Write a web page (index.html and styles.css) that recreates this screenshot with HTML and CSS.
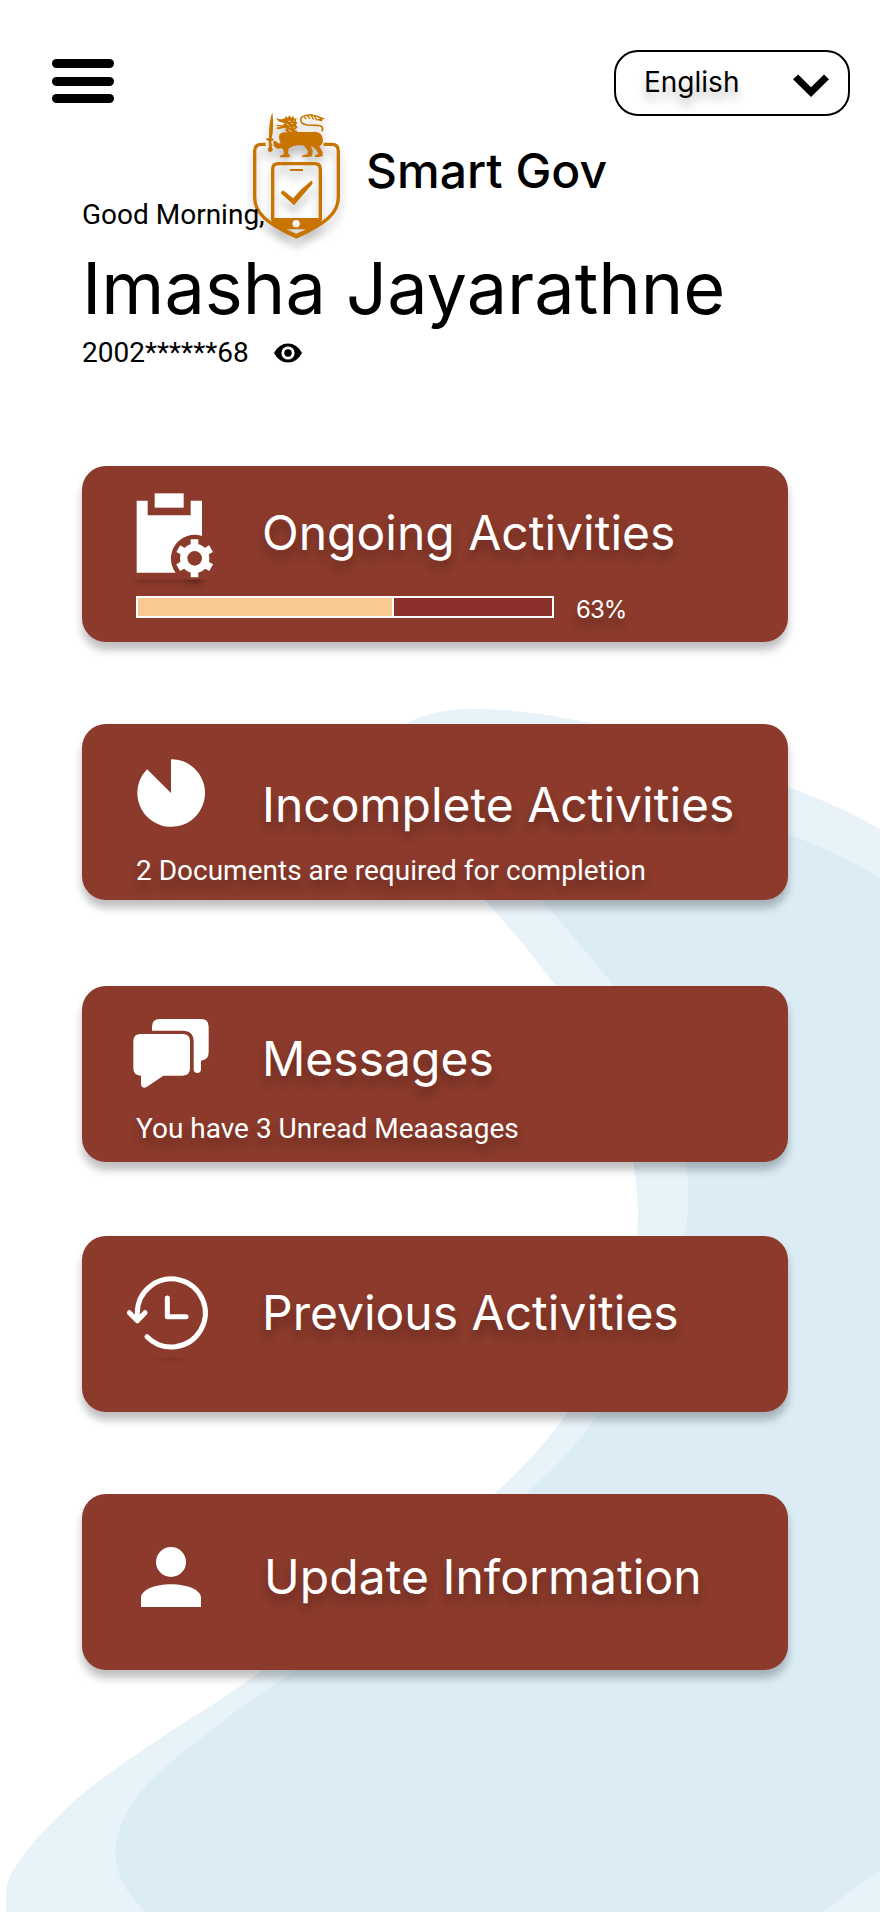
FILE: index.html
```html
<!DOCTYPE html>
<html lang="en">
<head>
<meta charset="utf-8">
<title>Smart Gov</title>
<link rel="stylesheet" href="styles.css">
</head>
<body>
<main class="screen">
  <svg class="backdrop" viewBox="0 0 880 1912" aria-hidden="true">
    <path fill="#e7f2f9" d="M395 732C410 717 440 709 475 709C570 709 700 748 788 787C820 799 852 813 880 829V1912H6V1892C7 1880 12 1870 22 1858C30 1846 40 1834 53 1822C64 1810 77 1798 90 1788C113 1770 140 1752 168 1733C200 1713 230 1694 263 1670C345 1617 425 1559 494 1494C523 1468 547 1442 568 1412C607 1352 637 1292 638 1215C638 1130 602 1048 555 985C532 954 508 925 485 900Z"/>
    <path fill="#dbecf5" d="M500 800C600 780 700 800 788 834C820 846 852 861 880 878V1870L822 1912H145C127 1893 115 1875 115.500 1853C116 1822 138 1789 168 1765C190 1746 220 1723 244 1705C262 1693 278 1682 295 1670C372 1612 452 1554 525 1494C553 1470 578 1444 600 1412C651 1343 688 1275 688.500 1192C687 1108 655 1040 613 985C590 956 566 928 542 900Z"/>
  </svg>

  <header class="topbar">
    <button class="menu" aria-label="Menu"><span></span><span></span><span></span></button>
    <button class="language">
      <span class="language-name">English</span>
      <svg class="chevron" viewBox="0 0 36 23"><path d="M5.200 0.500L18 13.200L31 0.500L36 5.200L18 23L0 5.200Z"/></svg>
    </button>
  </header>

  <div class="brand">
    <svg class="logo" viewBox="0 0 360 450" aria-hidden="true">
      <g fill="none" stroke="#c87400" stroke-width="10">
        <path d="M92 133H80Q59 133 59 153V292C59 340 95 370 184 411C273 370 310 340 310 292V153Q310 133 290 133H266"/>
        <path d="M113 360V208Q113 191 130 191H239Q256 191 256 208V360"/>
      </g>
      <g fill="#c87400">
        <path fill-rule="evenodd" d="M107 354H262L256 372L184 408L112 372ZM183.500 360A11 11 0 1 0 183.500 382A11 11 0 1 0 183.500 360ZM154 388L184 401L214 388Z"/>
        <rect x="165" y="207" width="39" height="6"/>
        <path d="M138 277Q142 268 150 275L174 295Q198 265 229 242Q234 242 232 252L177 316L141 283Q137 280 138 277Z"/>
        <path d="M112 37Q118 82 110 115L117 117L113 122L109 123L110 133L113 135L110 140L114 150L107 157L102 156L98 148L102 141L101 123L94 119V115L102 115Q101 65 112 37Z"/>
        <path d="M115 123Q121 120 126 127Q130 132 137 129Q127 108 137 100Q145 95 158 97L149 89Q150 87 156 87L150 83L131 88L123 85L126 82L141 81L124 77V74L143 76L150 70L139 67Q127 64 124 53Q134 62 150 55L153 48L158 54L163 46L168 53L176 48L177 57L185 53L182 65L188 68L182 75L188 81L182 88L187 96Q216 97 242 95Q264 98 264 122Q262 135 253 139L263 157V168L252 171H238L241 165L250 162L245 151L235 142L228 139L233 154L231 169L219 171H200L203 166L217 163L219 153L207 137Q190 134 173 139L161 145L159 160L166 168L162 172H134L137 166L147 163L145 149L139 144Q125 150 116 138Z"/>
      </g>
      <path d="M261 94Q268 76 247 76L217 75Q194 71 197 57Q202 44 230 45Q248 49 263 56L252 59L262 62" fill="none" stroke="#c87400" stroke-width="5"/>
      <path d="M207 50L214 58M217 47L225 57M228 46L236 59M238 48L245 61" stroke="#c87400" stroke-width="4"/>
      <path d="M160 63l8 1M174 64l4-3M155 72l6 4M168 72l6-2M163 80l5 5M174 80l5 4M160 90l10 5M179 93l4-6" stroke="#fff" stroke-width="2"/>
    </svg>
    <span class="brand-name">Smart Gov</span>
  </div>

  <section class="profile">
    <p class="greeting">Good Morning,</p>
    <h1 class="name">Imasha Jayarathne</h1>
    <div class="identity">
      <span class="id-number">2002******68</span>
      <svg class="eye" viewBox="0 0 28 20"><path d="M0 10Q5 0.500 14 0.500T28 10Q23 19.500 14 19.500T0 10Z"/><circle cx="14" cy="10" r="6.600" fill="#fff"/><circle cx="14" cy="10" r="3.700"/></svg>
    </div>
  </section>

  <nav class="cards">
    <a class="card card-ongoing">
      <div class="card-head">
        <svg class="icon" viewBox="144 108 288 288">
          <defs>
            <filter id="soft" x="-20%" y="-200%" width="140%" height="500%"><feGaussianBlur stdDeviation="9"/></filter>
            <clipPath id="below"><rect x="130" y="389" width="330" height="60"/></clipPath>
          </defs>
          <g clip-path="url(#below)"><path d="M200 360H400V394H200Z" fill="#000" opacity=".25" filter="url(#soft)"/><circle cx="374" cy="382" r="22" fill="#000" opacity=".18" filter="url(#soft)"/></g>
          <path d="M200 152H233V196H362V152H396V258A71 71 0 0 0 317 368H200Z"/>
          <path d="M254 130H341V173H254Z"/>
          <g transform="translate(374 325)">
            <path fill-rule="evenodd" d="M0-44A44 44 0 1 1 0 44A44 44 0 1 1 0-44ZM0-22A22 22 0 1 0 0 22A22 22 0 1 0 0-22Z"/>
            <g id="cog"><path d="M-12-57H11V-40H-12ZM-12 57H11V40H-12Z"/></g>
            <use href="#cog" transform="rotate(60)"/><use href="#cog" transform="rotate(120)"/>
          </g>
        </svg>
        <h2 class="title">Ongoing Activities</h2>
      </div>
      <div class="progress-row">
        <div class="progress"><div class="progress-fill"></div></div>
        <span class="percent">63%</span>
      </div>
    </a>

    <a class="card card-incomplete">
      <div class="card-head">
        <svg class="icon" viewBox="144 132 288 288"><path d="M303 279V177.500A101.500 101.500 0 1 1 231.500 207.500Z"/></svg>
        <h2 class="title">Incomplete Activities</h2>
      </div>
      <p class="note">2 Documents are required for completion</p>
    </a>

    <a class="card card-messages">
      <div class="card-head">
        <svg class="icon" viewBox="144 108 288 288">
          <path d="M212 192H338Q360 192 360 214V295Q360 317 338 317H280L230 351Q213 358 213 340V317Q190 317 190 295V214Q190 192 212 192Z"/>
          <path d="M246 182V170Q246 147 269 147H394Q416 147 416 170V247Q416 270 393 272V298Q393 309 382 309T371 298V215Q371 182 338 182Z"/>
        </svg>
        <h2 class="title">Messages</h2>
      </div>
      <p class="note">You have 3 Unread Meaasages</p>
    </a>

    <a class="card card-previous">
      <div class="card-head">
        <svg class="icon" viewBox="144 108 288 288">
          <clipPath id="under"><rect x="200" y="413" width="200" height="40"/></clipPath>
          <g clip-path="url(#under)"><ellipse cx="303" cy="400" rx="46" ry="13" opacity=".22" fill="#000" filter="url(#soft)"/></g>
          <g fill="none" stroke="#fff" stroke-width="15" stroke-linecap="round" stroke-linejoin="round">
            <path d="M202 298V279A102 102 0 1 1 231 350M178 278L202 302L225 278M292 234V290H348"/>
          </g>
        </svg>
        <h2 class="title">Previous Activities</h2>
      </div>
    </a>

    <a class="card card-update">
      <div class="card-head">
        <svg class="icon" viewBox="144 102 288 288"><circle cx="303" cy="246" r="45"/><path d="M213 381V354C213 328 258 313 303 313S393 328 393 354V381Z"/></svg>
        <h2 class="title">Update Information</h2>
      </div>
    </a>
  </nav>
</main>
</body>
</html>
```
FILE: styles.css
```css
* { box-sizing: border-box; }
body { margin: 0; background: #fff; color: #000; font-family: Inter, "Liberation Sans", sans-serif; font-optical-sizing: none; }
h1, h2, p { margin: 0; font-weight: 400; }
button { background: none; border: 0; padding: 0; color: inherit; font: inherit; }

.screen { position: relative; width: 880px; height: 1912px; overflow: hidden; }
.backdrop { position: absolute; inset: 0; width: 880px; height: 1912px; z-index: -1; }

.topbar { display: flex; justify-content: space-between; align-items: flex-start; height: 100px; padding: 50px 30px 0 52px; }
.menu { display: flex; flex-direction: column; gap: 8.5px; width: 62px; padding-top: 9px; }
.menu span { height: 9px; border-radius: 5px; background: #000; }
.language { display: flex; justify-content: space-between; align-items: center; width: 236px; height: 66px; padding: 0 19px 0 28px; border: 2px solid #000; border-radius: 24px; }
.language-name { margin-top: -2px; font-size: 28px; line-height: 34px; text-shadow: 0 8px 8px rgba(0, 0, 0, .25); }
.chevron { width: 36px; height: 23px; margin-top: 4px; }

.brand { display: flex; align-items: flex-start; height: 98px; padding-left: 235px; gap: 11px; }
.logo { flex: none; width: 120px; height: 150px; filter: drop-shadow(0 8px 4px rgba(0, 0, 0, .25)); }
.brand-name { margin-top: 41.5px; font-size: 48px; line-height: 58px; font-weight: 500; white-space: nowrap; }

.profile { position: relative; padding-left: 82px; }
.greeting { font: 28px/33px Roboto, sans-serif; }
.name { margin-top: 13px; font-size: 72px; line-height: 87px; white-space: nowrap; }
.identity { display: flex; align-items: center; gap: 25px; margin-top: 5px; font: 28px/33px Roboto, sans-serif; }
.eye { width: 28px; height: 20px; }

.cards { display: flex; flex-direction: column; padding: 97px 0 0 82px; }
.card { width: 706px; height: 176px; padding: 20px 0 0 36px; border-radius: 24px; background: #8b3a2b; color: #fff; box-shadow: 0 8px 8px rgba(0, 0, 0, .25); }
.card-incomplete { margin-top: 82px; }
.card-messages { margin-top: 86px; }
.card-previous { margin-top: 74px; }
.card-update { margin-top: 82px; }
.card-head { display: flex; align-items: flex-start; gap: 48px; height: 96px; }
.icon { flex: none; width: 96px; height: 96px; fill: #fff; overflow: visible; }
.title { margin-top: 18px; font-size: 48px; line-height: 58px; white-space: nowrap; text-shadow: 0 8px 8px rgba(0, 0, 0, .25); }
.card-incomplete .title { margin-top: 32px; }
.card-messages .title { margin-top: 24px; }
.card-previous .title { margin-top: 28px; }
.card-update .title { margin-top: 34px; padding-left: 2px; letter-spacing: .05px; }
.note { margin: 14px 0 0 18px; font: 28px/33px Roboto, sans-serif; text-shadow: 0 8px 8px rgba(0, 0, 0, .25); }
.card-messages .note { margin-top: 10px; }

.progress-row { display: flex; align-items: flex-start; gap: 22px; margin: 14px 0 0 18px; }
.progress { width: 418px; height: 22px; border: 2px solid #fff; background: #8b2f2a; }
.progress-fill { width: 256px; height: 18px; border-right: 2px solid #fff; background: #f8ca91; }
.percent { margin-top: -1px; font-size: 24px; line-height: 29px; letter-spacing: -1px; text-shadow: 0 8px 8px rgba(0, 0, 0, .25); }
```
